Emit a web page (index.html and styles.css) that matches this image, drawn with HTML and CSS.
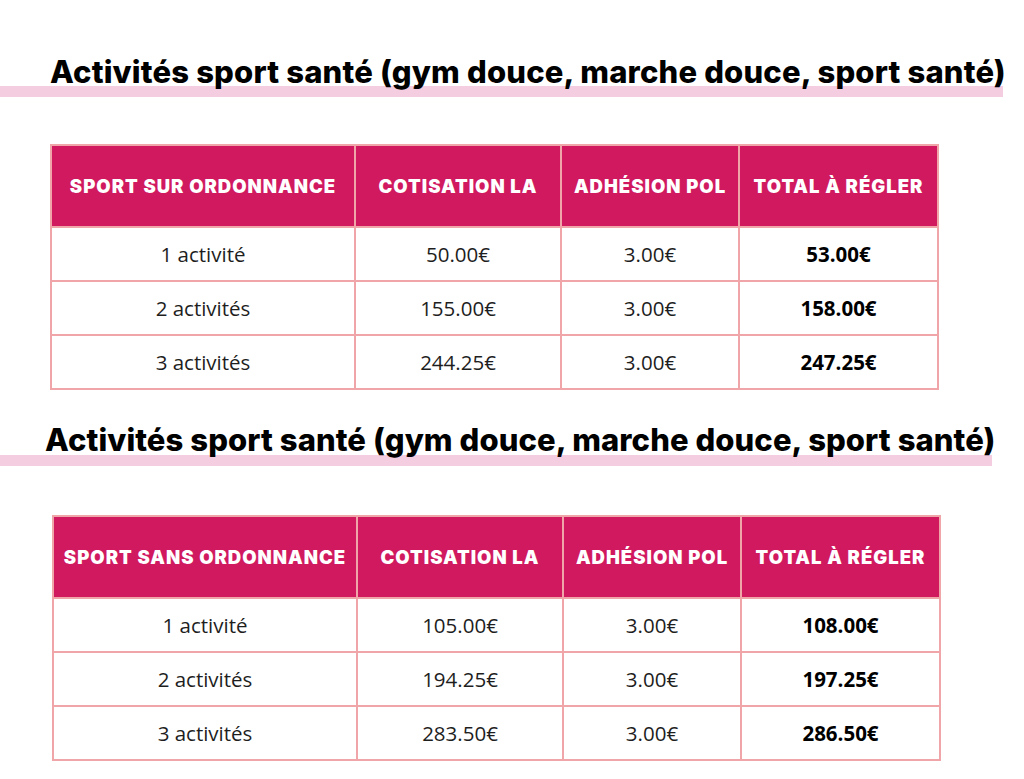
FILE: index.html
```html
<!DOCTYPE html>
<html lang="fr">
<head>
<meta charset="utf-8">
<title>Tarifs sport santé</title>
<link rel="stylesheet" href="styles.css">
</head>
<body>
<main class="page">
  <section class="block block-one">
    <h2 class="title">Activités sport santé (gym douce, marche douce, sport santé)</h2>
    <table class="prices">
      <colgroup>
        <col class="c1"><col class="c2"><col class="c3"><col class="c4">
      </colgroup>
      <thead>
        <tr><th>Sport sur ordonnance</th><th>Cotisation LA</th><th>Adhésion POL</th><th>Total à régler</th></tr>
      </thead>
      <tbody>
        <tr><td>1 activité</td><td>50.00€</td><td>3.00€</td><td class="total">53.00€</td></tr>
        <tr><td>2 activités</td><td>155.00€</td><td>3.00€</td><td class="total">158.00€</td></tr>
        <tr><td>3 activités</td><td>244.25€</td><td>3.00€</td><td class="total">247.25€</td></tr>
      </tbody>
    </table>
  </section>
  <section class="block block-two">
    <h2 class="title">Activités sport santé (gym douce, marche douce, sport santé)</h2>
    <table class="prices">
      <colgroup>
        <col class="c1"><col class="c2"><col class="c3"><col class="c4">
      </colgroup>
      <thead>
        <tr><th>Sport sans ordonnance</th><th>Cotisation LA</th><th>Adhésion POL</th><th>Total à régler</th></tr>
      </thead>
      <tbody>
        <tr><td>1 activité</td><td>105.00€</td><td>3.00€</td><td class="total">108.00€</td></tr>
        <tr><td>2 activités</td><td>194.25€</td><td>3.00€</td><td class="total">197.25€</td></tr>
        <tr><td>3 activités</td><td>283.50€</td><td>3.00€</td><td class="total">286.50€</td></tr>
      </tbody>
    </table>
  </section>
</main>
</body>
</html>
```

FILE: styles.css
```css
html, body {
  margin: 0;
  padding: 0;
  background: #ffffff;
}

.page {
  width: 1024px;
  height: 779px;
  overflow: hidden;
  font-family: "Open Sans", "Liberation Sans", sans-serif;
  color: #1c1c1c;
}

.block {
  display: flex;
  flex-direction: column;
  align-items: flex-start;
}

.block-one {
  padding-top: 54px;
}

.block-two {
  padding-top: 32px;
}

.title {
  margin: 0;
  font-family: "Inter", "Liberation Sans", sans-serif;
  font-weight: 800;
  font-size: 31px;
  line-height: 36px;
  letter-spacing: 0.17px;
  color: #000;
  white-space: nowrap;
  padding-bottom: 7px;
  background-image: linear-gradient(#f5cde0, #f5cde0);
  background-repeat: no-repeat;
  background-size: calc(100% - 3px) 11px;
  background-position: left bottom;
}

.block-one .title {
  padding-left: 50px;
}

.block-two .title {
  padding-left: 45px;
  padding-bottom: 8px;
  letter-spacing: 0.08px;
}

.prices {
  border-collapse: collapse;
  table-layout: fixed;
  width: 887px;
}

.block-one .prices {
  margin: 47px 0 0 50px;
}

.block-two .prices {
  margin: 49px 0 0 52px;
}

.c1 { width: 304px; }
.c2 { width: 206px; }
.c3 { width: 178px; }
.c4 { width: 199px; }

.prices th,
.prices td {
  border: 2px solid #f0a6a9;
  text-align: center;
  padding: 0;
  white-space: nowrap;
}

.prices th {
  height: 80px;
  background: #d0195f;
  color: #ffffff;
  font-family: "Inter", "Liberation Sans", sans-serif;
  font-weight: 900;
  font-size: 18.5px;
  text-transform: uppercase;
  letter-spacing: 1px;
}

.prices td {
  height: 52px;
  font-size: 20.5px;
  color: #1e1e1e;
}

.prices td.total {
  font-weight: 700;
  color: #000;
}
```
